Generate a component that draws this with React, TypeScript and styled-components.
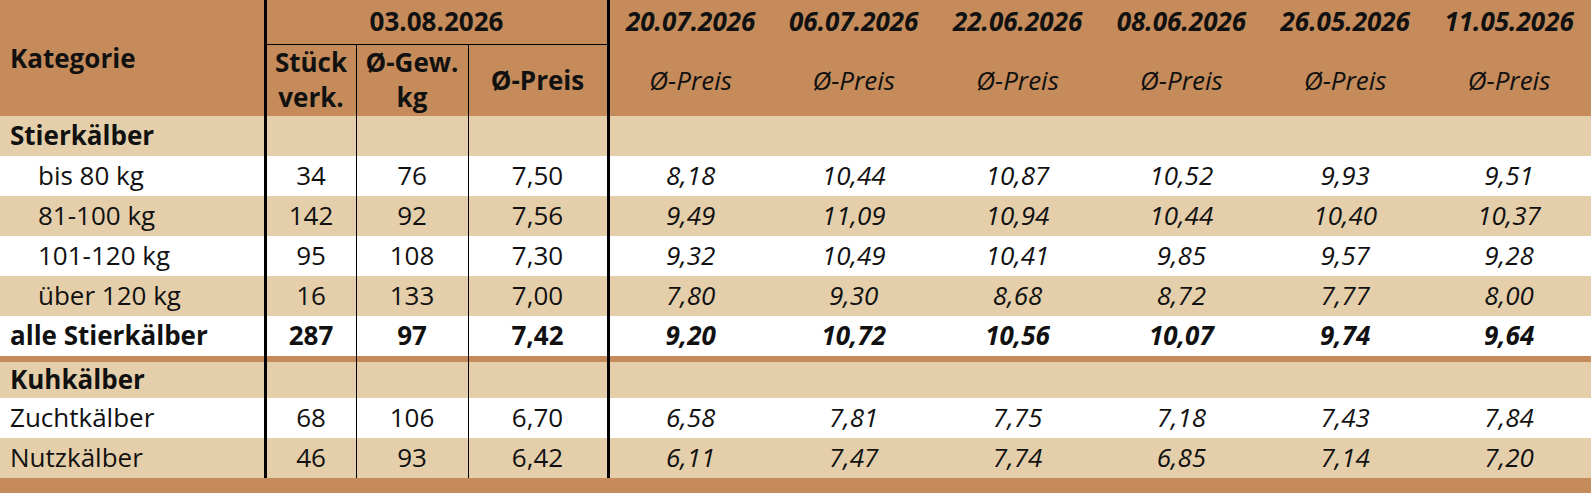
import React from 'react'
import styled, { createGlobalStyle, css } from 'styled-components'

const BROWN = '#c58b5a'
const SAND = '#e5cfab'

const GlobalStyle = createGlobalStyle`
  html, body {
    margin: 0;
    padding: 0;
    background: #ffffff;
  }
  body {
    font-family: 'Open Sans', 'Noto Sans', 'Liberation Sans', sans-serif;
    color: #111111;
  }
`

const Table = styled.table`
  width: 1591px;
  table-layout: fixed;
  border-collapse: collapse;
  font-size: 26px;
  line-height: 1.2;
`

const HeadRow = styled.tr<{ $h: number }>`
  background: ${BROWN};
  & > th {
    height: ${(p) => p.$h}px;
  }
`

const HeadCell = styled.th<{
  $align?: 'left' | 'center'
  $italic?: boolean
  $bold?: boolean
  $right?: 'thick' | 'thin'
  $under?: boolean
}>`
  box-sizing: border-box;
  padding: 0 2px;
  text-align: ${(p) => p.$align || 'center'};
  font-weight: ${(p) => (p.$bold === false ? 400 : 700)};
  font-style: ${(p) => (p.$italic ? 'italic' : 'normal')};
  vertical-align: middle;
  line-height: 35px;
  white-space: nowrap;
  ${(p) => p.$align === 'left' && css`padding-left: 10px;`}
  ${(p) => p.$right === 'thick' && css`border-right: 3px solid #000;`}
  ${(p) => p.$right === 'thin' && css`border-right: 1px solid #000;`}
  ${(p) => p.$under && css`border-bottom: 1px solid #000;`}
`

const DateHead = styled(HeadCell)`
  vertical-align: top;
  padding-top: 4px;
`

const Row = styled.tr<{ $tone: 'sand' | 'white' | 'brown'; $h?: number }>`
  background: ${(p) =>
    p.$tone === 'sand' ? SAND : p.$tone === 'brown' ? BROWN : '#ffffff'};
  & > td {
    height: ${(p) => p.$h ?? 40}px;
  }
`

const Label = styled.td<{ $indent?: boolean; $bold?: boolean }>`
  box-sizing: border-box;
  padding: 0 0 0 ${(p) => (p.$indent ? 38 : 10)}px;
  font-weight: ${(p) => (p.$bold ? 700 : 400)};
  border-right: 3px solid #000;
  white-space: nowrap;
  vertical-align: middle;
`

const Num = styled.td<{ $bold?: boolean; $italic?: boolean; $right?: 'thick' | 'thin' }>`
  box-sizing: border-box;
  padding: 0;
  text-align: center;
  vertical-align: middle;
  font-weight: ${(p) => (p.$bold ? 700 : 400)};
  font-style: ${(p) => (p.$italic ? 'italic' : 'normal')};
  ${(p) => p.$right === 'thick' && css`border-right: 3px solid #000;`}
  ${(p) => p.$right === 'thin' && css`border-right: 1px solid #000;`}
`

const Gap = styled.td`
  padding: 0;
`

const dates = ['20.07.2026', '06.07.2026', '22.06.2026', '08.06.2026', '26.05.2026', '11.05.2026']

type Line = {
  label: string
  indent?: boolean
  total?: boolean
  tone: 'sand' | 'white'
  values: [string, string, string]
  history: string[]
}

const groups: { title: string; lines: Line[] }[] = [
  {
    title: 'Stierkälber',
    lines: [
      { label: 'bis 80 kg', indent: true, tone: 'white', values: ['34', '76', '7,50'], history: ['8,18', '10,44', '10,87', '10,52', '9,93', '9,51'] },
      { label: '81-100 kg', indent: true, tone: 'sand', values: ['142', '92', '7,56'], history: ['9,49', '11,09', '10,94', '10,44', '10,40', '10,37'] },
      { label: '101-120 kg', indent: true, tone: 'white', values: ['95', '108', '7,30'], history: ['9,32', '10,49', '10,41', '9,85', '9,57', '9,28'] },
      { label: 'über 120 kg', indent: true, tone: 'sand', values: ['16', '133', '7,00'], history: ['7,80', '9,30', '8,68', '8,72', '7,77', '8,00'] },
      { label: 'alle Stierkälber', total: true, tone: 'white', values: ['287', '97', '7,42'], history: ['9,20', '10,72', '10,56', '10,07', '9,74', '9,64'] },
    ],
  },
  {
    title: 'Kuhkälber',
    lines: [
      { label: 'Zuchtkälber', tone: 'white', values: ['68', '106', '6,70'], history: ['6,58', '7,81', '7,75', '7,18', '7,43', '7,84'] },
      { label: 'Nutzkälber', tone: 'sand', values: ['46', '93', '6,42'], history: ['6,11', '7,47', '7,74', '6,85', '7,14', '7,20'] },
    ],
  },
]

function DataRow({ line }: { line: Line }) {
  const v = line.values
  return (
    <Row $tone={line.tone}>
      <Label $indent={line.indent} $bold={line.total}>{line.label}</Label>
      <Num $bold={line.total} $right="thin">{v[0]}</Num>
      <Num $bold={line.total} $right="thin">{v[1]}</Num>
      <Num $bold={line.total} $right="thick">{v[2]}</Num>
      {line.history.map((h, i) => (
        <Num key={i} $italic $bold={line.total}>{h}</Num>
      ))}
    </Row>
  )
}

function EmptyRow({ title, tone, h }: { title?: string; tone: 'sand' | 'brown'; h: number }) {
  return (
    <Row $tone={tone} $h={h}>
      <Label $bold>{title}</Label>
      <Num $right="thin" />
      <Num $right="thin" />
      <Num $right="thick" />
      <Gap colSpan={6} />
    </Row>
  )
}

export default function App() {
  return (
    <>
      <GlobalStyle />
      <Table>
        <colgroup>
          <col style={{ width: 265 }} />
          <col style={{ width: 91 }} />
          <col style={{ width: 112 }} />
          <col style={{ width: 140 }} />
          {dates.map((d) => (
            <col key={d} />
          ))}
        </colgroup>
        <thead>
          <HeadRow $h={44}>
            <HeadCell rowSpan={2} $align="left" $right="thick">Kategorie</HeadCell>
            <HeadCell colSpan={3} $right="thick" $under>03.08.2026</HeadCell>
            {dates.map((d) => (
              <DateHead key={d} $italic>{d}</DateHead>
            ))}
          </HeadRow>
          <HeadRow $h={72}>
            <HeadCell $right="thin">Stück<br />verk.</HeadCell>
            <HeadCell $right="thin">Ø-Gew.<br />kg</HeadCell>
            <HeadCell $right="thick">Ø-Preis</HeadCell>
            {dates.map((d) => (
              <HeadCell key={d} $italic $bold={false}>Ø-Preis</HeadCell>
            ))}
          </HeadRow>
        </thead>
        <tbody>
          {groups.map((g, gi) => (
            <React.Fragment key={g.title}>
              {gi > 0 && <EmptyRow tone="brown" h={6} />}
              <EmptyRow title={g.title} tone="sand" h={gi > 0 ? 36 : 40} />
              {g.lines.map((l) => (
                <DataRow key={l.label} line={l} />
              ))}
            </React.Fragment>
          ))}
        </tbody>
        <tfoot>
          <Row $tone="brown" $h={15}>
            <Gap colSpan={10} />
          </Row>
        </tfoot>
      </Table>
    </>
  )
}
